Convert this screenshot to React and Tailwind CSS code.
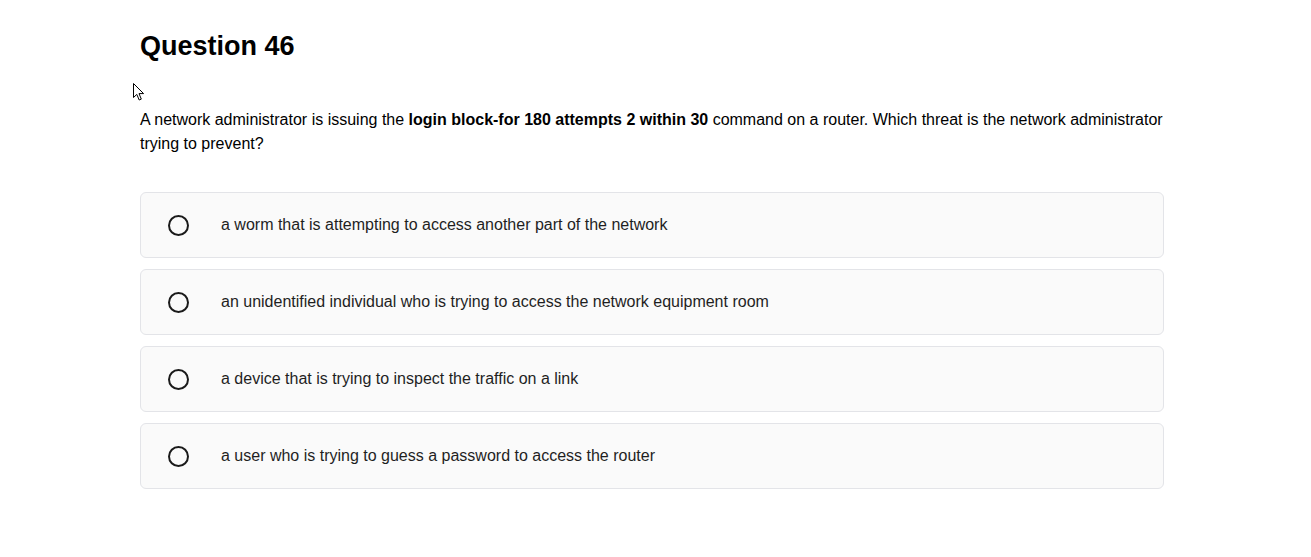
import React from 'react';

const options = [
  'a worm that is attempting to access another part of the network',
  'an unidentified individual who is trying to access the network equipment room',
  'a device that is trying to inspect the traffic on a link',
  'a user who is trying to guess a password to access the router',
];

const Cursor = () => (
  <svg
    className="absolute left-[132px] top-[82px]"
    width="14"
    height="20"
    viewBox="0 0 14 20"
  >
    <path
      d="M1.5 1.5 L1.5 15.5 L4.8 12.4 L7.2 18 L9.3 17.1 L7 11.6 L11.6 11.6 Z"
      fill="#fff"
      stroke="#000"
      strokeWidth="1"
      strokeLinejoin="round"
    />
  </svg>
);

export default function App() {
  return (
    <div
      className="relative min-h-[557px] bg-white text-black"
      style={{ fontFamily: '"Liberation Sans", Arial, sans-serif' }}
    >
      <Cursor />
      <div className="w-[1024px] ml-[140px] pt-[30px]">
        <h1 className="text-[27px] leading-[32px] font-bold">Question 46</h1>

        <p className="mt-[46px] text-[16px] leading-[24px]">
          A network administrator is issuing the{' '}
          <strong className="font-bold">login block-for 180 attempts 2 within 30</strong>{' '}
          command on a router. Which threat is the network administrator trying to prevent?
        </p>

        <div className="mt-[36px] flex flex-col gap-[11px]">
          {options.map((opt) => (
            <label
              key={opt}
              className="flex items-center h-[66px] pl-[27px] bg-[#fafafa] border border-[#e3e4e8] rounded-[6px]"
            >
              <span className="w-[21px] h-[21px] rounded-full border-2 border-[#1a1a1a] shrink-0" />
              <span className="ml-[32px] text-[16px] leading-[24px] text-[#1f1f1f]">{opt}</span>
            </label>
          ))}
        </div>
      </div>
    </div>
  );
}
